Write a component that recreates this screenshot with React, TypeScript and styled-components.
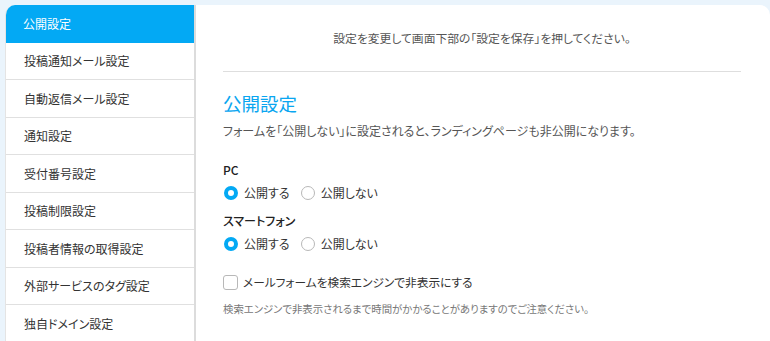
import React, { useState } from "react";
import styled, { createGlobalStyle } from "styled-components";

const GlobalStyle = createGlobalStyle`
  html, body {
    margin: 0;
    padding: 0;
    background: #eaf4fc;
    font-family: "Noto Sans CJK JP", "Noto Sans", sans-serif;
    font-feature-settings: "palt";
    color: #333;
  }
  * { box-sizing: border-box; }
`;

const Page = styled.div`
  display: flex;
  padding: 5px 0 0 5px;
  height: 341px;
  overflow: hidden;
`;

const Sidebar = styled.nav`
  width: 191px;
  flex-shrink: 0;
  background: #fff;
  border-top-left-radius: 10px;
  border-left: 1px solid #e4e4e4;
  border-right: 2px solid #dcdcdc;
  overflow: hidden;
`;

const NavItem = styled.div<{ $active?: boolean }>`
  height: 37.5px;
  display: flex;
  align-items: center;
  padding-left: 18px;
  font-size: 12px;
  color: ${(p) => (p.$active ? "#fff" : "#333")};
  background: ${(p) => (p.$active ? "#03a9f4" : "#fff")};
  border-bottom: 1px solid ${(p) => (p.$active ? "#03a9f4" : "#e0e0e0")};
  margin-left: ${(p) => (p.$active ? "-1px" : "0")};
`;

const Main = styled.main`
  flex: 1;
  background: #fff;
  border-top-right-radius: 10px;
  padding: 0 29px 0 27px;
`;

const Notice = styled.p`
  margin: 0;
  height: 67px;
  border-bottom: 1px solid #dedede;
  display: flex;
  align-items: center;
  justify-content: center;
  font-size: 11.8px;
  color: #555;
  padding-bottom: 2px;
`;

const Heading = styled.h2`
  margin: 18px 0 0;
  font-size: 18.5px;
  font-weight: 400;
  line-height: 26px;
  color: #0aa6f0;
`;

const Description = styled.p`
  margin: 7px 0 0;
  font-size: 12px;
  line-height: 16px;
  color: #555;
`;

const Options = styled.div`
  margin-top: 23px;
  display: flex;
  flex-direction: column;
  gap: 12px;
`;

const GroupLabel = styled.div`
  font-size: 12px;
  line-height: 16px;
  font-weight: 500;
  color: #222;
  margin-bottom: 7px;
`;

const RadioRow = styled.div`
  display: flex;
  gap: 10px;
`;

const RadioLabel = styled.label`
  display: flex;
  align-items: center;
  gap: 6px;
  font-size: 12px;
  line-height: 16px;
  color: #333;
  cursor: pointer;
`;

const RadioDot = styled.span<{ $checked: boolean }>`
  width: 14px;
  height: 14px;
  border-radius: 50%;
  border: ${(p) => (p.$checked ? "4px solid #03a9f4" : "1px solid #b8b8b8")};
  background: #fff;
  margin-left: 1px;
`;

const CheckRow = styled.label`
  display: flex;
  align-items: center;
  gap: 5px;
  margin-top: 22px;
  font-size: 11.7px;
  line-height: 16px;
  color: #333;
  cursor: pointer;
`;

const CheckBox = styled.span`
  width: 15px;
  height: 15px;
  border: 1px solid #b8b8b8;
  border-radius: 3px;
  background: #fff;
`;

const Note = styled.p`
  margin: 12px 0 0;
  font-size: 10.4px;
  line-height: 14px;
  color: #777;
`;

const navItems = [
  "公開設定",
  "投稿通知メール設定",
  "自動返信メール設定",
  "通知設定",
  "受付番号設定",
  "投稿制限設定",
  "投稿者情報の取得設定",
  "外部サービスのタグ設定",
  "独自ドメイン設定",
];

const RadioGroup = ({ label }: { label: string }) => {
  const [value, setValue] = useState("public");
  return (
    <div>
      <GroupLabel>{label}</GroupLabel>
      <RadioRow>
        <RadioLabel onClick={() => setValue("public")}>
          <RadioDot $checked={value === "public"} />
          公開する
        </RadioLabel>
        <RadioLabel onClick={() => setValue("private")}>
          <RadioDot $checked={value === "private"} />
          公開しない
        </RadioLabel>
      </RadioRow>
    </div>
  );
};

const App = () => {
  return (
    <>
      <GlobalStyle />
      <Page>
        <Sidebar>
          {navItems.map((item, i) => (
            <NavItem key={item} $active={i === 0}>
              {item}
            </NavItem>
          ))}
        </Sidebar>
        <Main>
          <Notice>設定を変更して画面下部の「設定を保存」を押してください。</Notice>
          <Heading>公開設定</Heading>
          <Description>
            フォームを「公開しない」に設定されると、ランディングページも非公開になります。
          </Description>
          <Options>
            <RadioGroup label="PC" />
            <RadioGroup label="スマートフォン" />
          </Options>
          <CheckRow>
            <CheckBox />
            メールフォームを検索エンジンで非表示にする
          </CheckRow>
          <Note>
            検索エンジンで非表示されるまで時間がかかることがありますのでご注意ください。
          </Note>
        </Main>
      </Page>
    </>
  );
};

export default App;
